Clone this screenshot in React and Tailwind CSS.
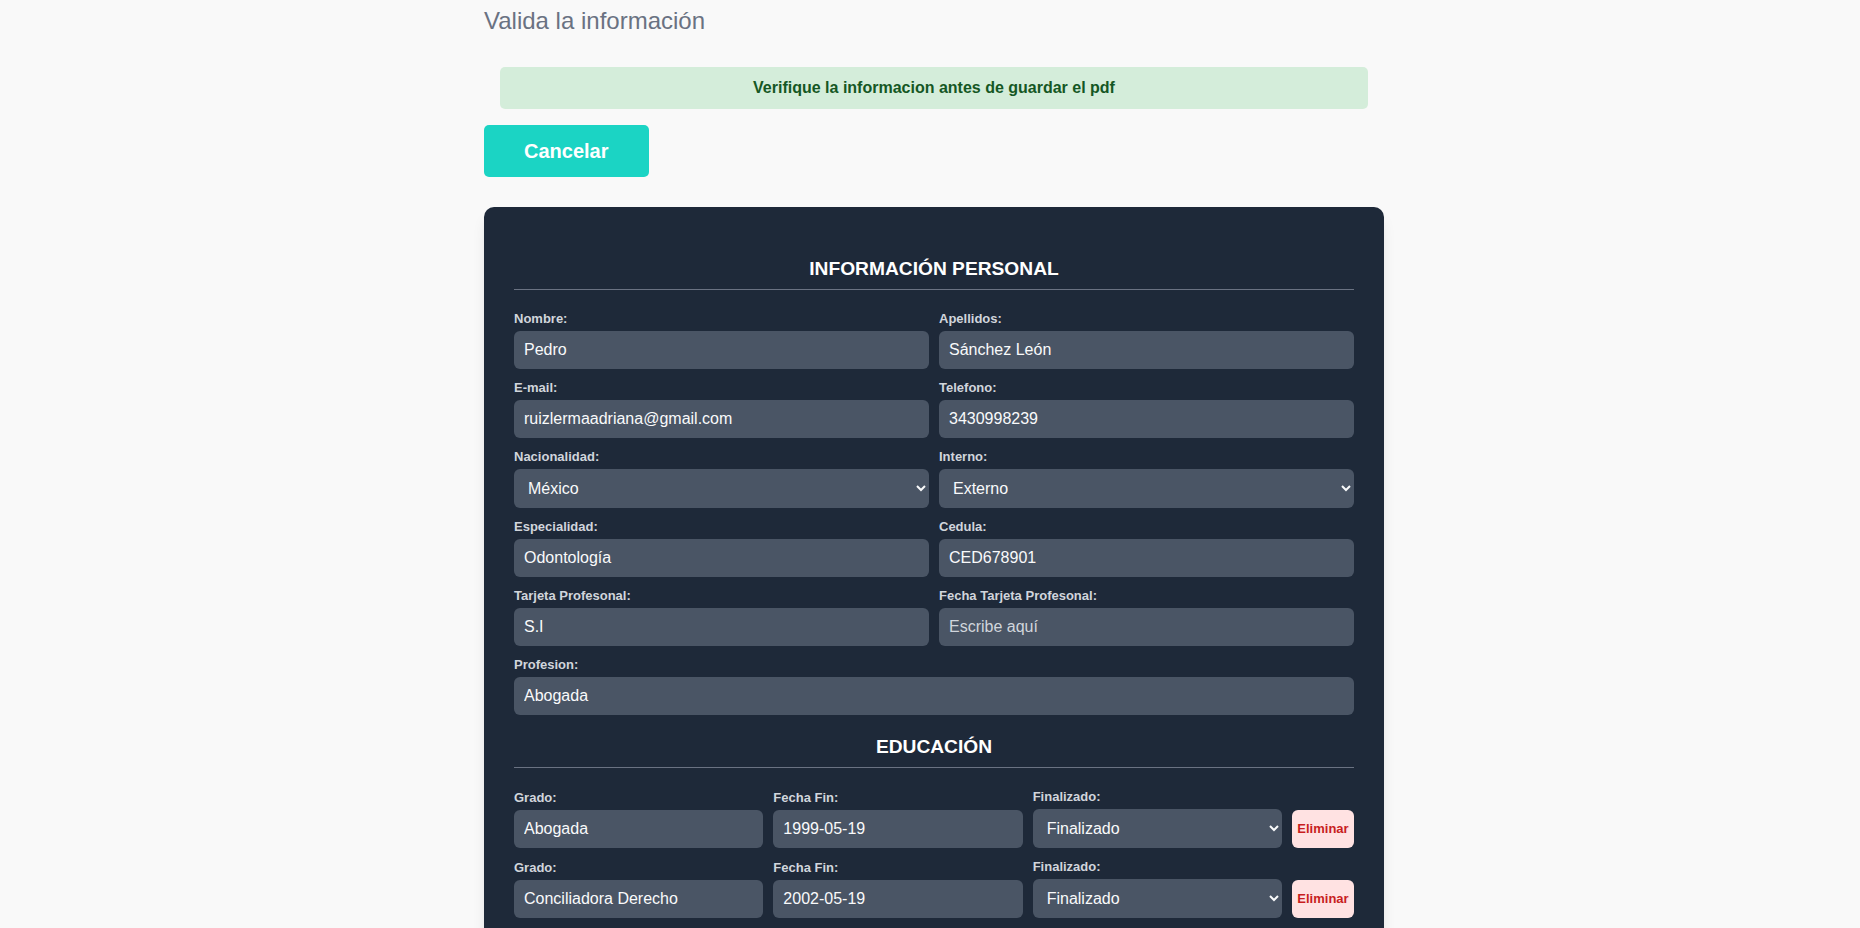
import React from "react";

const personal = [
  [
    { label: "Nombre:", value: "Pedro" },
    { label: "Apellidos:", value: "Sánchez León" },
  ],
  [
    { label: "E-mail:", value: "ruizlermaadriana@gmail.com" },
    { label: "Telefono:", value: "3430998239" },
  ],
  [
    { label: "Nacionalidad:", value: "México", select: ["México", "Otro"] },
    { label: "Interno:", value: "Externo", select: ["Interno", "Externo"] },
  ],
  [
    { label: "Especialidad:", value: "Odontología" },
    { label: "Cedula:", value: "CED678901" },
  ],
  [
    { label: "Tarjeta Profesonal:", value: "S.I" },
    { label: "Fecha Tarjeta Profesonal:", value: "", placeholder: "Escribe aquí" },
  ],
];

const educacion = [
  { grado: "Abogada", fin: "1999-05-19", estado: "Finalizado" },
  { grado: "Conciliadora Derecho", fin: "2002-05-19", estado: "Finalizado" },
];

function Label({ children }) {
  return <label className="block text-[13px] leading-5 font-bold text-gray-300 mb-[2px]">{children}</label>;
}

function TextInput({ value, placeholder }) {
  return (
    <input
      type="text"
      defaultValue={value}
      placeholder={placeholder}
      className="block w-full h-[38px] px-[10px] rounded-md bg-gray-600 text-[16px] text-gray-50 placeholder:text-gray-300 outline-none"
    />
  );
}

function Select({ value, options }) {
  return (
    <select
      defaultValue={value}
      className="block w-full h-[39px] px-[10px] rounded-md bg-gray-600 text-[16px] text-gray-50 outline-none"
    >
      {options.map((o) => (
        <option key={o}>{o}</option>
      ))}
    </select>
  );
}

function Field({ f }) {
  return (
    <div className="mb-[9px]">
      <Label>{f.label}</Label>
      {f.select ? <Select value={f.value} options={f.select} /> : <TextInput value={f.value} placeholder={f.placeholder} />}
    </div>
  );
}

function SectionTitle({ children, className = "" }) {
  return (
    <h2 className={"text-center text-[19.2px] leading-6 font-bold text-white pb-2 border-b border-gray-500 mb-[19px] " + className}>
      {children}
    </h2>
  );
}

export default function App() {
  return (
    <div className="min-h-screen bg-[#f9f9f9] font-['Liberation_Sans',Arial,sans-serif]">
      <div className="max-w-[908px] mx-auto pl-2 pt-[5px]">
        <h1 className="text-2xl text-gray-500">Valida la información</h1>

        <div className="mx-4 mt-[30px] py-[9px] rounded-[5px] bg-[#d4edda] text-center text-[16px] leading-6 font-bold text-[#155724]">
          Verifique la informacion antes de guardar el pdf
        </div>

        <button className="mt-4 px-10 py-3 rounded-[5px] bg-[#1bd4c4] text-xl leading-7 font-bold text-white">
          Cancelar
        </button>

        <div className="mt-[30px] rounded-[10px] bg-gray-800 shadow-lg px-[30px] pt-[39px] pb-[30px]">
          <SectionTitle className="mt-[11px]">INFORMACIÓN PERSONAL</SectionTitle>

          {personal.map((row, i) => (
            <div key={i} className="grid grid-cols-2 gap-x-[10px]">
              {row.map((f) => (
                <Field key={f.label} f={f} />
              ))}
            </div>
          ))}
          <Field f={{ label: "Profesion:", value: "Abogada" }} />

          <SectionTitle className="mt-[20px]">EDUCACIÓN</SectionTitle>

          {educacion.map((e, i) => (
            <div key={i} className="grid grid-cols-[1fr_1fr_1fr_62px] gap-x-[10px] items-end mb-[9px]">
              <div>
                <Label>Grado:</Label>
                <TextInput value={e.grado} />
              </div>
              <div>
                <Label>Fecha Fin:</Label>
                <TextInput value={e.fin} />
              </div>
              <div>
                <Label>Finalizado:</Label>
                <Select value={e.estado} options={["Finalizado", "En curso"]} />
              </div>
              <button className="h-[38px] rounded-md bg-red-100 text-[13px] font-bold text-[#c81e1e]">Eliminar</button>
            </div>
          ))}
        </div>
      </div>
    </div>
  );
}
